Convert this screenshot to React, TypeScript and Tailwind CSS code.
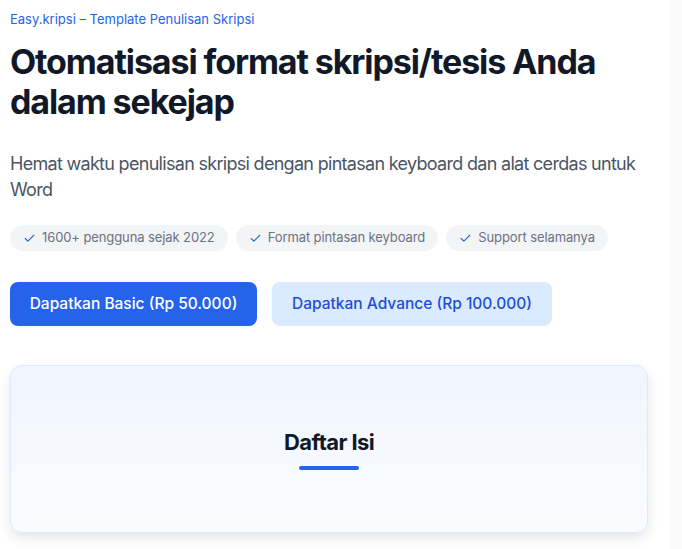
import { Check } from 'lucide-react';

const chips = ['1600+ pengguna sejak 2022', 'Format pintasan keyboard', 'Support selamanya'];

export default function App() {
  return (
    <div className="flex min-h-[549px] bg-white font-['Inter',sans-serif]">
      <main className="w-[670px] pl-[10px] pt-[10px]">
        <p className="text-[13px] leading-[18px] text-[#2563eb] tracking-[0px]">
          Easy.kripsi – Template Penulisan Skripsi
        </p>

        <h1 className="mt-[14px] text-[34px] leading-[40px] font-bold text-[#111827] tracking-[-1.1px]">
          Otomatisasi format skripsi/tesis Anda
          <br />
          dalam sekejap
        </h1>

        <p className="mt-[29px] w-[650px] text-[18px] leading-[26px] text-[#4b5563] tracking-[-0.7px]">
          Hemat waktu penulisan skripsi dengan pintasan keyboard dan alat cerdas untuk Word
        </p>

        <div className="mt-[22px] flex gap-2">
          {chips.map((c) => (
            <span
              key={c}
              className="flex h-[26px] items-center gap-[6px] rounded-full bg-[#f3f4f6] px-[13px] text-[13px] text-[#6b7280] tracking-[-0.1px]"
            >
              <Check className="h-[13px] w-[13px] text-[#2563eb]" strokeWidth={2} />
              {c}
            </span>
          ))}
        </div>

        <div className="mt-[31px] flex gap-[15px]">
          <button className="h-[44px] w-[247px] rounded-lg bg-[#2563eb] text-[15.5px] font-medium text-white">
            Dapatkan Basic (Rp 50.000)
          </button>
          <button className="h-[44px] w-[280px] rounded-lg bg-[#dbeafe] text-[15.5px] font-medium text-[#1d4ed8]">
            Dapatkan Advance (Rp 100.000)
          </button>
        </div>

        <div className="mt-[39px] flex h-[168px] w-[638px] flex-col items-center justify-center rounded-xl border border-[#dbeafe] bg-gradient-to-b from-[#f0f5fe] to-[#fafcff] shadow-[0_5px_12px_rgba(0,0,0,0.1)]">
          <h2 className="text-[22px] leading-[28px] font-bold text-[#111827] tracking-[-0.6px]">Daftar Isi</h2>
          <div className="mt-[10px] h-[4px] w-[60px] rounded-full bg-[#2563eb]" />
        </div>
      </main>
      <aside className="flex-1 bg-[#fafafa]" />
    </div>
  );
}
